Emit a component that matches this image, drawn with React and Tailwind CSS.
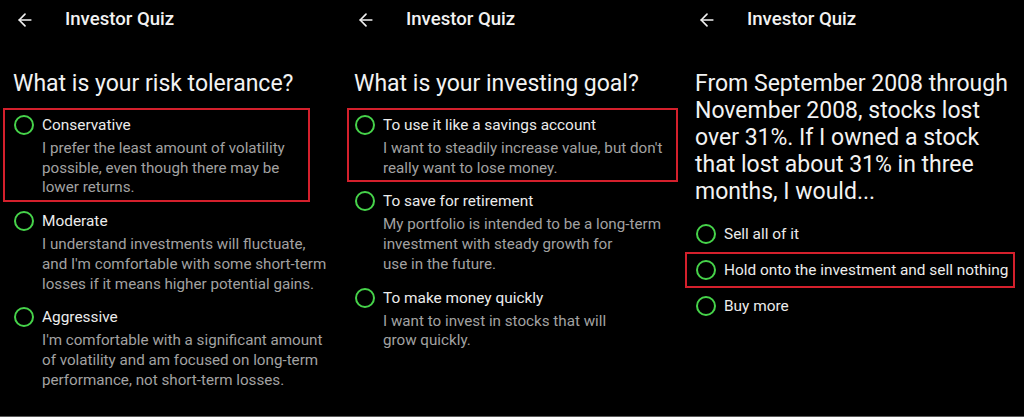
import { ArrowLeft } from "lucide-react";

const panels = [
  {
    width: "w-[341px]",
    title: ["What is your risk tolerance?"],
    optionsGap: "mt-[11px]",
    options: [
      {
        label: "Conservative",
        desc: ["I prefer the least amount of volatility", "possible, even though there may be", "lower returns."],
        boxed: true,
        box: "w-[307px] pl-[9px]",
      },
      {
        label: "Moderate",
        desc: ["I understand investments will fluctuate,", "and I'm comfortable with some short-term", "losses if it means higher potential gains."],
        box: "pl-[9px]",
      },
      {
        label: "Aggressive",
        desc: ["I'm comfortable with a significant amount", "of volatility and am focused on long-term", "performance, not short-term losses."],
        box: "pl-[9px]",
      },
    ],
  },
  {
    width: "w-[341px]",
    title: ["What is your investing goal?"],
    optionsGap: "mt-[11px]",
    options: [
      {
        label: "To use it like a savings account",
        desc: ["I want to steadily increase value, but don't", "really want to lose money."],
        boxed: true,
        box: "ml-[3px] w-[331px] pl-[6px]",
      },
      {
        label: "To save for retirement",
        desc: ["My portfolio is intended to be a long-term", "investment with steady growth for", "use in the future."],
        box: "ml-[3px] pl-[6px]",
      },
      {
        label: "To make money quickly",
        desc: ["I want to invest in stocks that will", "grow quickly."],
        box: "ml-[3px] pl-[6px]",
      },
    ],
  },
  {
    width: "w-[342px]",
    title: [
      "From September 2008 through",
      "November 2008, stocks lost",
      "over 31%. If I owned a stock",
      "that lost about 31% in three",
      "months, I would...",
    ],
    optionsGap: "mt-[11px]",
    compact: true,
    options: [
      { label: "Sell all of it", box: "w-[330px] pl-[9px]" },
      { label: "Hold onto the investment and sell nothing", boxed: true, box: "w-[330px] pl-[9px]" },
      { label: "Buy more", box: "w-[330px] pl-[9px]" },
    ],
  },
];

function Radio() {
  return <div className="w-5 h-5 shrink-0 rounded-full border-[2.5px] border-[#46d34a]" />;
}

function Option({ opt, compact }) {
  return (
    <div
      className={`border-2 ${opt.boxed ? "border-[#d4202c]" : "border-transparent"} ${opt.box} ${
        compact ? "py-[6px]" : "pt-[5px] pb-[2px]"
      } flex gap-[8px]`}
    >
      <Radio />
      <div className="flex flex-col">
        <div className="text-[15.4px] leading-5 text-[#ececec] whitespace-nowrap">{opt.label}</div>
        {opt.desc && (
          <div className="mt-[4px] text-[15.2px] leading-[19.7px] text-[#a2a2a2] whitespace-nowrap">
            {opt.desc.map((line) => (
              <div key={line}>{line}</div>
            ))}
          </div>
        )}
      </div>
    </div>
  );
}

function Panel({ p }) {
  return (
    <div className={`${p.width} shrink-0 flex flex-col`}>
      <div className="h-[40px] flex items-center pl-[15px]">
        <ArrowLeft size={20} strokeWidth={2} className="text-[#f0f0f0]" />
        <span className="ml-[30px] text-[18.6px] font-medium text-[#f2f2f2]">Investor Quiz</span>
      </div>
      <div className="mt-[30px] pl-[13px] text-[23px] leading-[27px] text-[#f2f2f2] whitespace-nowrap">
        {p.title.map((line) => (
          <div key={line}>{line}</div>
        ))}
      </div>
      <div className={`${p.optionsGap} pl-[3px] flex flex-col ${p.compact ? "" : "gap-[2px]"}`}>
        {p.options.map((opt) => (
          <Option key={opt.label} opt={opt} compact={p.compact} />
        ))}
      </div>
    </div>
  );
}

export default function App() {
  return (
    <div
      className="w-[1024px] h-[417px] bg-black border-b border-[#5a5a5a] flex overflow-hidden"
      style={{ fontFamily: "Roboto, 'Noto Sans', sans-serif" }}
    >
      {panels.map((p, i) => (
        <Panel key={i} p={p} />
      ))}
    </div>
  );
}
